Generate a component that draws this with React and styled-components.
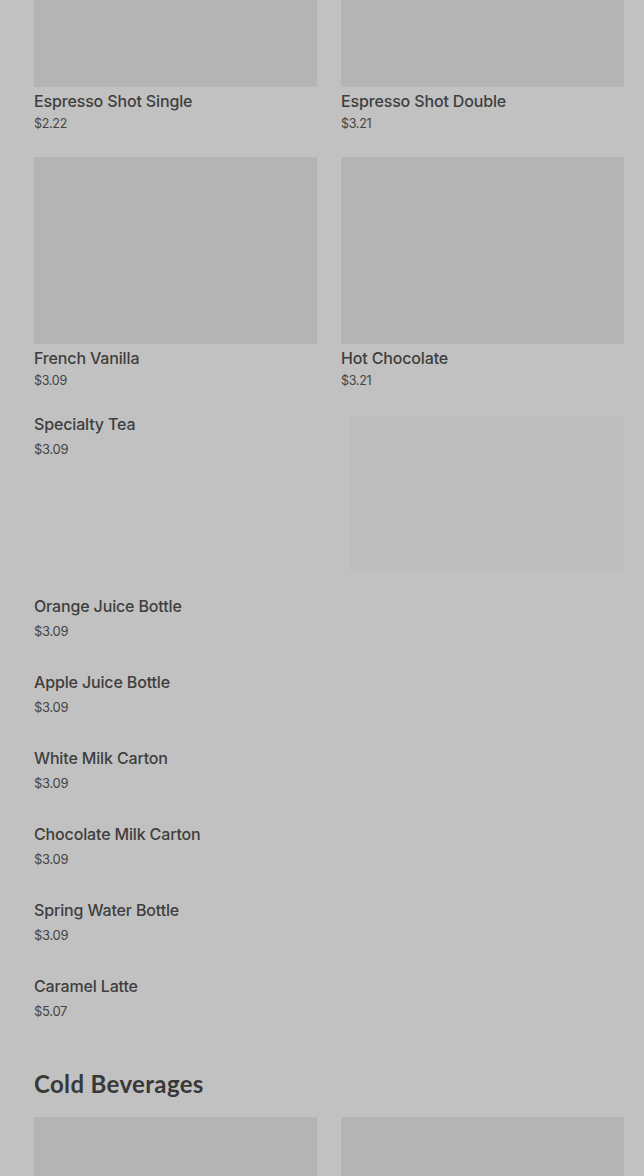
import React from 'react';
import styled, { createGlobalStyle } from 'styled-components';

const GlobalStyle = createGlobalStyle`
    html, body {
        margin: 0;
        padding: 0;
        background: #c1c1c1;
        overflow: hidden;
    }
    body {
        font-family: Inter, "Noto Sans", sans-serif;
        color: #3e3e3e;
    }
`

const Page = styled.div`
    padding: 0 20px 0 34px;
    margin-top: -100px;
`

const Grid = styled.div`
    display: grid;
    grid-template-columns: 1fr 1fr;
    column-gap: 24px;
    row-gap: 24px;
`

const Card = styled.div`
    display: flex;
    flex-direction: column;
`

const Thumb = styled.div`
    height: 187px;
    background: #b4b4b4;
`

const Placeholder = styled.div`
    height: 155px;
    margin: 2px 0 0 8px;
    background: #bdbdbd;
`

const Name = styled.div`
    font-size: 16px;
    font-weight: 500;
    line-height: 20px;
    letter-spacing: -0.15px;
    margin: 4px 0 4px;
    white-space: nowrap;
`

const Price = styled.div`
    font-size: 12.5px;
    line-height: 18px;
    color: #444;
    letter-spacing: -0.3px;
`

const Item = styled.div`
    height: 52px;
    display: flex;
    flex-direction: column;
    gap: 5px;

    ${Name} {
        margin: 0;
    }
    ${Price} {
        font-size: 13px;
        line-height: 20px;
    }
`

const List = styled.div`
    display: flex;
    flex-direction: column;
    gap: 24px;
    margin-top: 25px;
`

const Heading = styled.h2`
    font-family: Lato, "Noto Sans", sans-serif;
    font-weight: 700;
    font-size: 24px;
    line-height: 28px;
    letter-spacing: 0.35px;
    color: #383838;
    margin: 42px 0 19px;
`

const hot = [
    ['Espresso Shot Single', '$2.22'],
    ['Espresso Shot Double', '$3.21'],
    ['French Vanilla', '$3.09'],
    ['Hot Chocolate', '$3.21'],
]

const rest = [
    ['Orange Juice Bottle', '$3.09'],
    ['Apple Juice Bottle', '$3.09'],
    ['White Milk Carton', '$3.09'],
    ['Chocolate Milk Carton', '$3.09'],
    ['Spring Water Bottle', '$3.09'],
    ['Caramel Latte', '$5.07'],
]

export default function App() {
    return (
        <>
            <GlobalStyle />
            <Page>
                <Grid>
                    {hot.map(([name, price]) => (
                        <Card key={name}>
                            <Thumb />
                            <Name>{name}</Name>
                            <Price>{price}</Price>
                        </Card>
                    ))}
                    <Item>
                        <Name>Specialty Tea</Name>
                        <Price>$3.09</Price>
                    </Item>
                    <Placeholder />
                </Grid>
                <List>
                    {rest.map(([name, price]) => (
                        <Item key={name}>
                            <Name>{name}</Name>
                            <Price>{price}</Price>
                        </Item>
                    ))}
                </List>
                <Heading>Cold Beverages</Heading>
                <Grid>
                    <Card><Thumb /></Card>
                    <Card><Thumb /></Card>
                </Grid>
            </Page>
        </>
    )
}
